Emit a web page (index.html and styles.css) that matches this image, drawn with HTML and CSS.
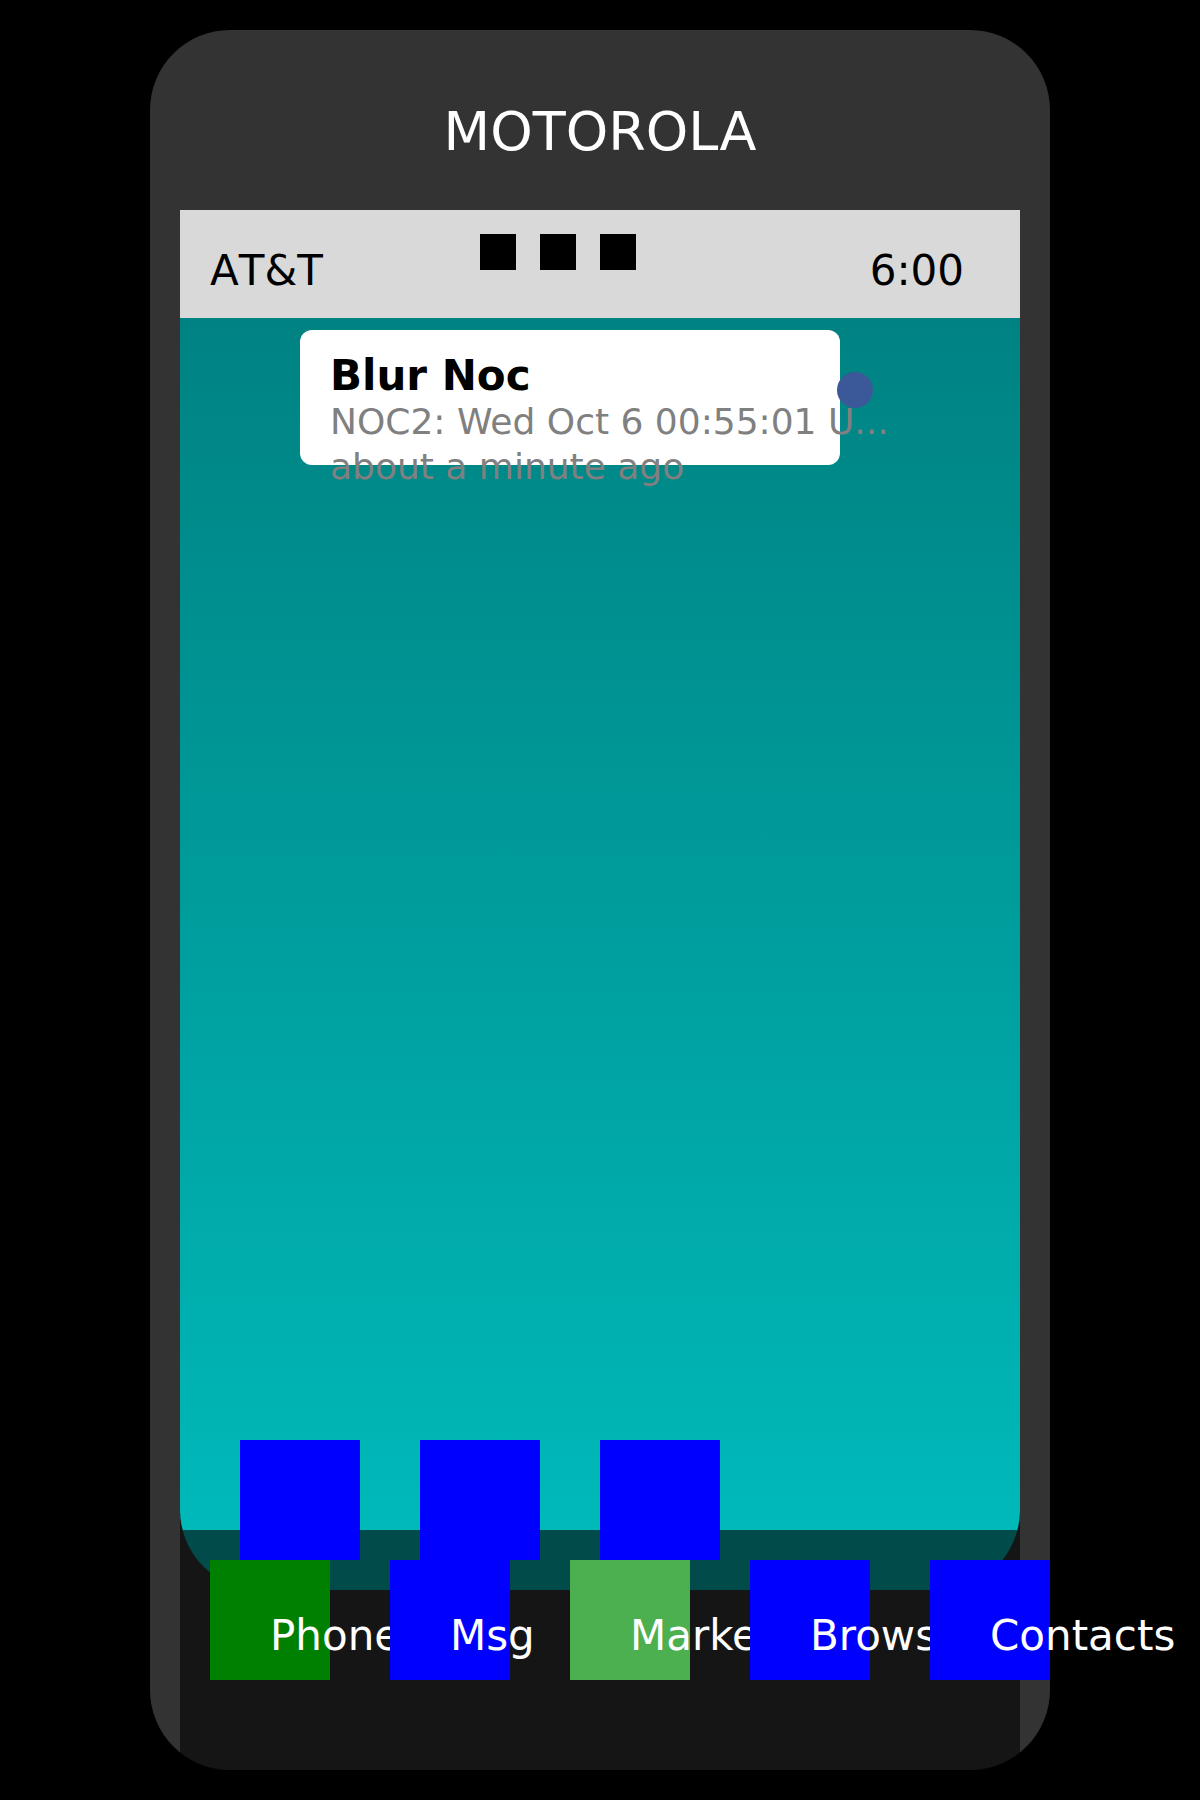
FILE: index.html
```html
<!DOCTYPE html>
<html lang="en">
<head>
<meta charset="utf-8">
<title>Motorola</title>
<link rel="stylesheet" href="styles.css">
</head>
<body>
  <div class="phone">
    <div class="brand">MOTOROLA</div>
    <div class="status">
      <span class="carrier">AT&amp;T</span>
      <div class="signal"><i></i><i></i><i></i></div>
      <span class="clock">6:00</span>
    </div>
    <div class="screen">
      <div class="notification">
        <div class="notif-title">Blur Noc</div>
        <div class="notif-text notif-first">NOC2: Wed Oct 6 00:55:01 U...</div>
        <div class="notif-text">about a minute ago</div>
        <span class="notif-dot"></span>
      </div>
      <div class="home-row">
        <div class="tile"></div>
        <div class="tile"></div>
        <div class="tile"></div>
      </div>
    </div>
    <div class="dock">
      <div class="app app-phone"><span class="app-label">Phone</span></div>
      <div class="app"><span class="app-label">Msg</span></div>
      <div class="app app-market"><span class="app-label">Market</span></div>
      <div class="app"><span class="app-label">Browser</span></div>
      <div class="app"><span class="app-label">Contacts</span></div>
    </div>
  </div>
</body>
</html>
```

FILE: styles.css
```css
html {
  background: #000;
}

body {
  margin: 0;
  box-sizing: border-box;
  width: 1200px;
  height: 1800px;
  padding: 30px 0 0 150px;
  background: #000;
  font-family: "DejaVu Sans", "Liberation Sans", sans-serif;
}

.phone {
  box-sizing: border-box;
  width: 900px;
  height: 1740px;
  padding: 0 30px;
  border-radius: 80px;
  background:
    linear-gradient(#151515, #151515) 30px 1400px / 840px 340px no-repeat,
    #333333;
  display: flex;
  flex-direction: column;
}

.brand {
  box-sizing: border-box;
  height: 180px;
  padding-top: 75px;
  text-align: center;
  color: #fff;
  font-size: 54px;
  line-height: 54px;
}

.status {
  box-sizing: border-box;
  height: 108px;
  background: #d9d9d9;
  display: grid;
  grid-template-columns: 270px 1fr auto;
  align-items: start;
  padding: 0 56px 0 30px;
  color: #000;
  font-size: 42px;
  line-height: 42px;
}

.carrier,
.clock {
  margin-top: 39.5px;
  white-space: nowrap;
}

.carrier {
  font-kerning: none;
}

.signal {
  display: flex;
  gap: 24px;
  margin-top: 24px;
}

.signal i {
  display: block;
  width: 36px;
  height: 36px;
  background: #000;
}

.screen {
  height: 1272px;
  flex: none;
  border-radius: 0 0 80px 80px;
  background:
    linear-gradient(#024b4b, #024b4b) left bottom / 100% 60px no-repeat,
    linear-gradient(#008282, #00b9b9 calc(100% - 60px));
  display: flex;
  flex-direction: column;
}

.notification {
  position: relative;
  align-self: flex-start;
  box-sizing: border-box;
  width: 540px;
  height: 135px;
  margin: 12px 0 0 120px;
  padding: 25px 0 0 30px;
  background: #fff;
  border-radius: 12px;
}

.notif-title {
  color: #000;
  font-weight: bold;
  font-size: 42px;
  line-height: 42px;
  white-space: nowrap;
}

.notif-text {
  color: #808080;
  font-size: 36px;
  line-height: 45px;
  white-space: nowrap;
}

.notif-first {
  margin-top: 2px;
}

.notif-dot {
  position: absolute;
  left: 537px;
  top: 42px;
  width: 36px;
  height: 36px;
  border-radius: 50%;
  background: #3b5998;
}

.home-row {
  margin-top: auto;
  margin-bottom: 30px;
  padding-left: 60px;
  display: flex;
  gap: 60px;
}

.tile {
  width: 120px;
  height: 120px;
  background: #0000ff;
}

.dock {
  margin-top: -30px;
  padding-left: 30px;
  display: flex;
  gap: 60px;
}

.app {
  position: relative;
  flex: none;
  width: 120px;
  height: 120px;
  background: #0000ff;
}

.app-phone {
  background: #008000;
}

.app-market {
  background: #4caf50;
}

.app-label {
  display: block;
  padding: 54.5px 0 0 60px;
  color: #fff;
  font-size: 42px;
  line-height: 42px;
  white-space: nowrap;
}
```
